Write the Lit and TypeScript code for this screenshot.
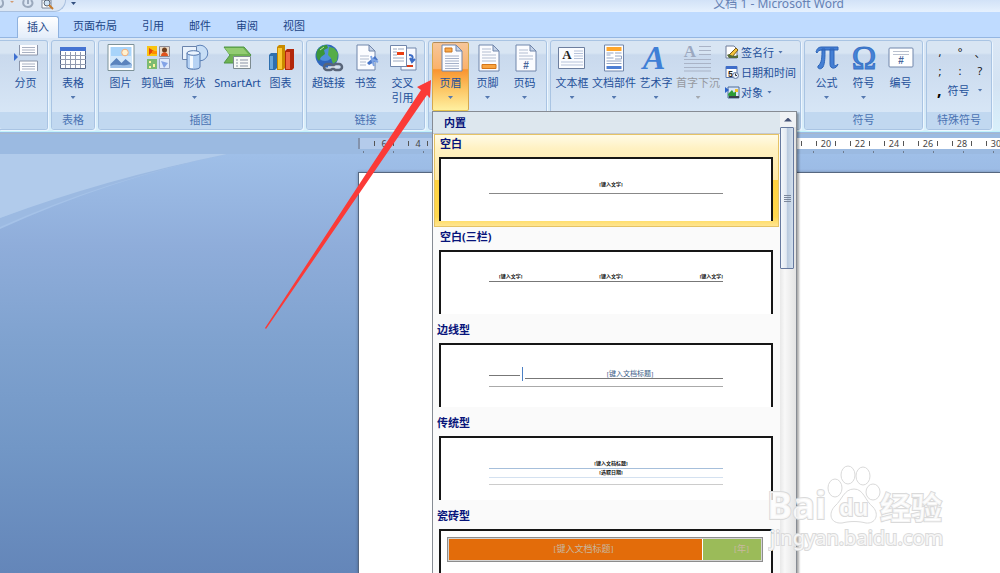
import { LitElement, html, svg, css, nothing, TemplateResult } from "lit";
import { customElement, property } from "lit/decorators.js";
import { classMap } from "lit/directives/class-map.js";

const page = svg`<path d="M5 1h14l6 6v20H5z" fill="#fbfcff" stroke="#7186ab"/><path d="M19 1v6h6z" fill="#c5d3e8" stroke="#7186ab"/>`;

const icons: Record<string, TemplateResult> = {
  blank: svg`<path d="M3 1h15v26H3z" fill="#fff" stroke="#7186ab"/>`,
  break: svg`<g stroke="#8c96aa" fill="#fdfdff"><path d="M7.500 1v10h18V1M7.500 27V17h18v10"/></g>
    <path d="M10 3.500h13M10 6h13M10 8.500h13M10 20h13M10 22.500h13M10 25h13" stroke="#a9b1c2"/><path d="M2 9l4 4-4 4z" fill="#3d6fd0"/>`,
  table: svg`<path d="M1.500 3.500h25v21h-25z" fill="#fff" stroke="#56698c"/><path d="M1 3h26v4H1z" fill="#4674d2"/>
    <path d="M1 11.500h26M1 15.500h26M1 20.500h26M6.500 8v16M11.500 8v16M16.500 8v16M21.500 8v16" stroke="#929bb0"/>`,
  picture: svg`<path d="M1 .5h26v26H1z" fill="#fff" stroke="#7d9299"/><path d="M3.500 3h21v21h-21z" fill="#a8d4fa"/><path d="M3.500 12h21v12h-21z" fill="#d3e8fb"/>
    <circle cx="18" cy="8.500" r="3.300" fill="#fff1cf" stroke="#f2ad79"/><path d="M3.500 20l6-6 5 5 4-4 6 5v2h-21z" fill="#5b83bd"/><path d="M3.500 22c5-3 10 1 21-2v4h-21z" fill="#9dc0e8"/>`,
  clip: svg`<path d="M3 2h10v10H3z" fill="#f9c411"/><path d="M5 4l5 3-5 4z" fill="#e2470b"/><path d="M8 7h5v3H8z" fill="#ff8c00"/>
    <path d="M15.500 2.500h10v10h-10z" fill="#e9d9c7" stroke="#8b8b96"/><circle cx="20.500" cy="6" r="2.500" fill="#704020"/><path d="M17 12c0-5 7-5 7 0z" fill="#e0521c"/>
    <path d="M3 15h10v10H3z" fill="#7dbb72"/><path d="M5 17h2v2H5zM9 20h2v3H9zM5 22h2v2H5z" fill="#fff3a0"/>
    <path d="M15.500 14.500h10v10h-10z" fill="#dfe9fb" stroke="#99a6c4"/><path d="M17 17l7 2-4 5z" fill="#83a2e6"/>`,
  shapes: svg`<circle cx="19" cy="9" r="7.800" fill="#c7def6" stroke="#5d82b8"/><path d="M1.500 2.500h14v13h-14z" fill="#e9f2fc" stroke="#6a84ac"/>
    <path d="M6 9v14c0 3 13 3 13 0V9z" fill="#b7d3f4" stroke="#5578ad"/><path d="M9 10v14h3V10z" fill="#f5faff"/><ellipse cx="12.500" cy="9" rx="6.500" ry="2.300" fill="#eaf4ff" stroke="#5578ad"/>`,
  smartart: svg`<path d="M0 3h20l7 8-7 8H0l6-8z" fill="#6fb253" stroke="#4f9645"/><path d="M1 4h18l5 6H5z" fill="#93cc72"/>
    <path d="M9.500 12.500h17v12h-17z" fill="#f8faf7" stroke="#7d8b90"/><path d="M12 16h2M12 19h2M12 22h2M16 16h8M16 19h8M16 22h8" stroke="#8993a5"/>`,
  chart: svg`<path d="M2 11l2-2h6v15l-2 2H2z" fill="#2f6fae"/><path d="M3 12h3v13H3z" fill="#69a6dc"/><path d="M10 3l2-2h6v23l-2 2h-6z" fill="#c98b00"/><path d="M11 4h4v21h-4z" fill="#f9c932"/>
    <path d="M18 7l2-2h7v19l-2 2h-7z" fill="#b2270b"/><path d="M19 8h4v17h-4z" fill="#ee6744"/>`,
  link: svg`<circle cx="12" cy="12" r="11.500" fill="#2f66bd"/><circle cx="10" cy="9" r="8" fill="#4f90dc"/><path d="M2 7c2-4 6-6 10-6l1 3-4 2 1 4-4 3-2 4C1 14 1 10 2 7z" fill="#3b963a"/><path d="M14 3l5 1 4 5-1 8-4 3-2-6-3-3z" fill="#55ad49"/><path d="M5 6l4-3" stroke="#b9e6a1"/>
    <g fill="none" stroke="#596579" stroke-width="2.500"><rect x="9" y="20" width="9" height="6" rx="3"/><rect x="18" y="20" width="9" height="6" rx="3"/></g><path d="M13 23h10" stroke="#dce2ea" stroke-width="1.500"/>`,
  bookmark: svg`<path d="M5 1h12l6 6v19H5z" fill="#fbfcff" stroke="#7186ab"/><path d="M17 1v6h6z" fill="#c5d3e8" stroke="#7186ab"/><path d="M8 12h9M8 15h9M8 18h6M8 21h6" stroke="#b0bbcf"/><path d="M15 19l8-7 3 4-9 5z" fill="#4775c8"/><path d="M19 12l3 10M26 18l-6-3" stroke="#7ea4e3" stroke-width="2"/>`,
  cross: svg`<path d="M12 4h15v22H12z" fill="#f7f9ff" stroke="#7186ab"/><path d="M20 11c5 0 4 4 2 6M21 14l2 4 3-3" fill="none" stroke="#3c6cc6" stroke-width="2"/><path d="M15 21h9v2h-9z" fill="#da3b15"/>
    <path d="M1.500 1.500h16v21h-16z" fill="#fff" stroke="#7186ab"/><path d="M4 5h4M4 8h4M4 11h4M4 14h11M4 17h11M9 5h6" stroke="#9ba8c0"/><path d="M8 8h7v3H8z" fill="#ea3e13"/>`,
  header: svg`${page}<path d="M8 4h7v4H8z" fill="#f8a849" stroke="#cc751c"/><path d="M8 12h14M8 14.500h14M8 17h14M8 19.500h14M8 22h14M8 24.500h14" stroke="#a4b0c8"/>`,
  footer: svg`${page}<path d="M8 5h9M8 8h9M8 11h14M8 14h14M8 17h14" stroke="#b2bdd1"/><path d="M8 20.500h14v4H8z" fill="#f9a33f" stroke="#d4761a"/>`,
  number: svg`${page}<path d="M8 6h9M8 9h9M8 12h14M8 15h14" stroke="#b2bdd1"/><text x="15" y="25" class="hash">#</text>`,
  textbox: svg`<path d="M.5 3.500h26v21H.5z" fill="#fbfcff" stroke="#6d7f9f"/><text x="9" y="15" class="serif">A</text><path d="M16 7h9M16 9.500h9M16 12h9M16 14.500h9M3 18h22M3 21h22" stroke="#b7c3da"/>`,
  parts: svg`<path d="M4.500 1h19v26h-19z" fill="#fff" stroke="#7186ab"/><path d="M6.500 3h15v4h-15z" fill="#ffa62b"/><path d="M6.500 9h7M6.500 11h4M15 9h6.500M6.500 14h7M15 12h6.500v3H15M6.500 17h15M6.500 19.500h15" stroke="#95a6c5" fill="none"/><path d="M6.500 22h15v3h-15z" fill="#4e7fd4"/>`,
  wordart: svg`<text x="12" y="25" class="art">A</text>`,
  dropcap: svg`<text x="6" y="13" class="cap">A</text><path d="M15 2.500h12M15 6.500h12M15 10.500h12M0 15.500h27M0 19.500h27M0 23.500h27M0 27h27" stroke="#a9b3c6"/>`,
  pi: svg`<path d="M3 8C4 4 6 3 9 3h16v3H9C6 6 5 7 4 9zM9 5h3c0 8 0 14-2 18-2 3-6 2-5-1 4-3 4-9 4-17zM17 5h4v15c0 2 2 2 4 0-1 5-8 6-8 0z" fill="#447fd4" stroke="#2e65b8"/>`,
  omega: svg`<text x="14" y="25" class="omega">Ω</text>`,
  numbering: svg`<rect x="2" y="4" width="24" height="19" rx="1" fill="#fff" stroke="#7186ab"/><path d="M6 7.500h16M6 10.500h16" stroke="#bac1cf"/><text x="14" y="20" class="hash">#</text>`,
  sign: svg`<path d="M1 1h8l3 3v9H1z" fill="#fff" stroke="#6c7b98"/><path d="M4 10l7-7 2 2-6 7z" fill="#f4c33b" stroke="#7b5a16"/><path d="M2 10c3-3 4 3 11 0v3H4z" fill="#556a37"/>`,
  date: svg`<path d="M1 1.500h11v11H1z" fill="#fff" stroke="#5a76ad"/><path d="M1 1h11v3H1z" fill="#3f6dc9"/><text x="5.500" y="12" class="day">5</text><circle cx="10.500" cy="10.500" r="3" fill="#e8f0fb" stroke="#61779e"/><path d="M10.500 8.500v2h1.500" stroke="#333" fill="none"/>`,
  object: svg`<path d="M3 2h11v11H3z" fill="#dbe7f6" stroke="#4d6c9c"/><path d="M0 2l4 3-4 3z" fill="#2b62c9"/><path d="M3 9l4-4 2 3 2-3v8H4z" fill="#2c9b36"/><path d="M10 4h3v3h-3z" fill="#f2c12d"/><path d="M4 12h10" stroke="#38404f" stroke-width="2"/>`,
};

const icon = (name: string, size = 28) =>
  html`<svg class="icon" width=${size} height=${size} viewBox="0 0 ${size} ${size}" aria-hidden="true">${icons[name]}</svg>`;

const iconText = css`
  .icon { display: block; flex: none; overflow: visible; }
  .icon text { text-anchor: middle; }
  .hash { font: bold 10px "Liberation Sans", sans-serif; fill: #47659b; }
  .serif { font: bold 13px "Liberation Serif", serif; fill: #222; }
  .art { font: italic bold 34px "Liberation Serif", serif; fill: #3f7fd6; }
  .cap { font: bold 17px "Liberation Serif", serif; fill: #9ba8c0; }
  .omega { font: 33px "Liberation Serif", serif; fill: #4583d8; stroke: #3a73c6; }
  .day { font: bold 9px "Liberation Sans", sans-serif; fill: #222; }
`;

@customElement("ribbon-button")
class RibbonButton extends LitElement {
  @property() label = "";
  @property() second = "";
  @property() icon = "";
  @property({ type: Boolean }) menu = false;
  @property({ type: Boolean }) active = false;
  @property({ type: Boolean }) disabled = false;

  static styles = [iconText, css`
    :host { display: flex; flex: none; width: 37px; }
    button {
      flex: 1; min-width: 0; display: flex; flex-direction: column; align-items: center;
      padding: 1px 0 0; border: 1px solid transparent; border-radius: 2px; background: none;
      font: inherit; line-height: 15px; color: inherit; white-space: nowrap;
    }
    .icon { margin-bottom: 3px; }
    .label { display: block; }
    .active {
      border-color: #b08a5a #d5a94e #e8c64e;
      background: linear-gradient(#f6c69a, #fbb26b 38%, #f9942f 40%, #fcc766 70%, #fff0a0);
    }
    button:disabled { color: #96999f; }
    .caret { width: 5px; height: 3px; margin-top: 6px; background: #5478b0; clip-path: polygon(0 0, 100% 0, 50% 100%); }
    button:disabled .caret { background: #a5a9b0; }
  `];

  render() {
    return html`<button class=${classMap({ active: this.active })} ?disabled=${this.disabled}>
      ${icon(this.icon)}
      <span class="label">${this.label}</span>
      ${this.second ? html`<span class="label">${this.second}</span>` : nothing}
      ${this.menu ? html`<span class="caret"></span>` : nothing}
    </button>`;
  }
}

@customElement("header-gallery")
class HeaderGallery extends LitElement {
  static styles = css`
    :host {
      display: grid; grid-template-columns: 1fr 16px; box-sizing: border-box;
      border: 1px solid #868b93; border-bottom: 0; background: #fafafa;
      box-shadow: 2px 2px 2px #0005; color: #07147a;
    }
    .heading {
      margin: 0; padding-left: 11px; background: #dde7ee; border-bottom: 1px solid #c5c9cf;
      font-size: 11px; line-height: 21px; font-weight: bold;
    }
    .item {
      display: block; width: 100%; padding: 0 5px 5px 4px; border: 1px solid transparent;
      background: none; font: inherit; color: inherit; text-align: left;
    }
    .list { padding: 0 1px; }
    .name { display: block; padding: 0 0 5px 1px; font-size: 11px; line-height: 17px; font-weight: bold; }
    .outdent .name { margin-left: -3px; }
    .selected {
      border-color: #e5c365;
      background: linear-gradient(#fffbe6, #fff1c2 15%, #ffe9a8 49%, #ffd23f 50%, #ffd850 90%, #ffe591);
    }
    .preview {
      display: block; box-sizing: border-box; height: 64px; padding: 0 48px; overflow: hidden;
      border: solid #161616; border-width: 2px 2px 0; background: #fff; color: #111;
      font-family: "Liberation Serif", "Noto Sans CJK SC", serif; font-size: 5px; line-height: 9px; font-weight: bold;
    }
    .one { display: block; padding: 21px 0 4px 10px; border-bottom: 1px solid #888; text-align: center; }
    .three { display: flex; justify-content: space-between; padding: 20px 0 0 10px; border-bottom: 1px solid #777; }
    .side { display: flex; padding-top: 22px; gap: 2px; font-size: 7px; line-height: 14px; font-weight: normal; color: #3a5b87; text-align: center; }
    .side-left { width: 31px; height: 8px; border-bottom: 1px solid #777; }
    .side-bar { width: 1px; height: 14px; background: #4c80c4; }
    .side-title { flex: 1; height: 11px; border-bottom: 1px solid #777; padding-left: 12px; }
    .rule { display: block; border-bottom: 1px solid #aaa; }
    .side + .rule { padding-top: 5px; }
    .classic { display: block; padding-left: 10px; text-align: center; line-height: 8px; border-bottom: 1px solid #a6bfdb; }
    .classic:first-child { padding-top: 22px; }
    .classic + .classic { border-color: #d4e1f0; }
    .classic + .rule { padding-top: 6px; border-color: #ccc; }
    .wide { padding: 6px 8px 0 6px; }
    .tiles { display: flex; gap: 1px; padding: 1px; border: 1px solid #8d8d8d; outline: 1px solid #d5d5d5; outline-offset: -2px; font-size: 9px; line-height: 21px; font-weight: normal; color: #c8b8a0; }
    .tile-title { flex: 1; background: #e36c0a; text-align: center; padding-left: 16px; }
    .tile-year { width: 46px; padding-right: 12px; background: #9bbb59; text-align: right; }
    .scroll { background: linear-gradient(90deg, #e8e8e8, #f8f8f8 30%, #e3e3e3); display: flex; flex-direction: column; }
    .up { height: 15px; padding: 0; border: 0; background: #f0f2f5; display: grid; place-items: center; }
    .up::before { content: ""; width: 8px; height: 4px; background: #465377; clip-path: polygon(50% 0, 100% 100%, 0 100%); }
    .thumb {
      box-sizing: border-box; width: 14px; height: 142px; border: 1px solid #66799f; border-radius: 1px;
      background: linear-gradient(90deg, #f3f7fb, #e2e9f2 45%, #b8c9de 50%, #d2dfed); display: grid; place-items: center;
    }
    .grip { width: 7px; height: 7px; background: repeating-linear-gradient(#7c889c 0 1px, transparent 1px 2px); }
  `;

  private item(name: string, body: TemplateResult, kind = "") {
    return html`<button class="item ${kind}"><span class="name">${name}</span>${body}</button>`;
  }

  render() {
    return html`
      <div>
        <h2 class="heading">内置</h2>
        <div class="list">
          ${this.item("空白", html`<span class="preview"><span class="one">[键入文字]</span></span>`, "selected")}
          ${this.item("空白(三栏)", html`<span class="preview"><span class="three">
            <span>[键入文字]</span><span>[键入文字]</span><span>[键入文字]</span></span></span>`)}
          ${this.item("边线型", html`<span class="preview"><span class="side">
            <span class="side-left"></span><span class="side-bar"></span><span class="side-title">[键入文档标题]</span></span>
            <span class="rule"></span></span>`, "outdent")}
          ${this.item("传统型", html`<span class="preview"><span class="classic">[键入文档标题]</span>
            <span class="classic">[选取日期]</span><span class="rule"></span></span>`, "outdent")}
          ${this.item("瓷砖型", html`<span class="preview wide"><span class="tiles">
            <span class="tile-title">[键入文档标题]</span><span class="tile-year">[年]</span></span></span>`, "outdent")}
        </div>
      </div>
      <div class="scroll">
        <button class="up" aria-label="向上滚动"></button>
        <div class="thumb"><span class="grip"></span></div>
      </div>`;
  }
}

@customElement("app-root")
class AppRoot extends LitElement {
  static styles = [iconText, css`
    :host {
      --page-left: 358px;
      position: relative; display: flex; flex-direction: column; height: 100vh; overflow: hidden;
      font: 11px "Noto Sans", "Noto Sans CJK SC", sans-serif; color: #24509a; background: #9bbae3;
    }
    .title-bar { display: flex; align-items: flex-end; height: 12px; background: linear-gradient(#d2e2f7, #e6f1fe); }
    .quick {
      box-sizing: border-box; display: flex; align-items: center; gap: 6px; width: 66px; height: 12px; overflow: hidden;
      border: solid #a9c0df; border-width: 0 1px 1px 0; border-radius: 0 0 14px 0; background: #dbe6f4;
    }
    .more { width: 5px; height: 3px; margin: 0 0 7px 5px; background: #33507f; clip-path: polygon(0 0, 100% 0, 50% 100%); }
    .title { margin: 0 156px 0 auto; font-size: 12px; line-height: 17px; font-weight: normal; color: #6581b4; }
    .tabs { display: flex; align-items: flex-end; gap: 1px; box-sizing: border-box; height: 26px; padding-left: 17px; background: #bfdbff; border-bottom: 1px solid #94b6e2; }
    .tab { height: 22px; padding: 0 12px; border: 0; background: none; font: inherit; line-height: 20px; color: #1c4587; }
    .current { padding: 0 9px 2px; margin: 0 1px -1px 0; border: 1px solid #8fb2df; border-bottom: 0; border-radius: 3px 3px 0 0; background: linear-gradient(#fff, #e3edfa); line-height: 18px; }
    .ribbon { display: flex; gap: 3px; padding: 2px 0 1px; background: linear-gradient(#dbe7f5, #d4e3f3 50%, #d9f0fb); border-bottom: 1px solid #c1f3fb; }
    .group {
      flex: none; box-sizing: border-box; display: flex; flex-direction: column;
      border: 1px solid #a9c4e3; border-radius: 3px; box-shadow: 1px 1px 0 #edf6ff;
      background: linear-gradient(#d8e5f3 0 12px, #c9d9ed 14px, #d7e6f6 72px);
    }
    .clipped { width: 48px; overflow: hidden; border-left: 0; border-radius: 0 3px 3px 0; }
    .clipped .tools { justify-content: flex-end; gap: 5px; }
    .tools { display: flex; height: 69px; padding: 1px 3px; }
    .caption { margin: 0; height: 17px; line-height: 16px; font-size: 11px; font-weight: normal; text-align: center; background: #c1d8f0; color: #4a73b3; border-radius: 0 0 2px 2px; }
    .solo .tools { padding: 1px; justify-content: center; }
    .solo { width: 44px; }
    .dense .tools { padding: 1px 0; }
    .dense ribbon-button { width: 42px; }
    .broad { width: 49px; }
    .anchor { position: relative; display: flex; }
    header-gallery { position: absolute; z-index: 2; top: 100%; left: 0; width: 365px; height: calc(100vh - 111px); overflow: hidden; }
    .stack { display: flex; flex-direction: column; width: 75px; padding-left: 6px; }
    .small { display: flex; align-items: center; gap: 2px; height: 20px; padding: 0; border: 0; background: none; font: inherit; color: inherit; white-space: nowrap; }
    .arrow-down { flex: none; width: 5px; height: 3px; margin-left: 2px; background: #5478b0; clip-path: polygon(0 0, 100% 0, 50% 100%); }
    .special { display: grid; grid-template-columns: repeat(3, 20px); grid-auto-rows: 19px; width: 58px; }
    .mark { padding: 0; border: 0; background: none; font: inherit; color: #111; }
    .all-marks { grid-column: 1 / -1; gap: 6px; padding-left: 7px; }
    .dot { font-size: 16px; line-height: 16px; color: #000; font-weight: bold; }
    .ruler-bar { height: 21px; padding: 4px 0 0 var(--page-left); box-sizing: border-box; border-top: 1px solid #a6b7cc; background: #9bbae1; margin-top: 1px; }
    .ruler { display: flex; height: 11px; overflow: hidden; background: linear-gradient(90deg, #b4cbeb 128px, #fff 128px); color: #444; font-size: 9px; line-height: 11px; }
    .edge { flex: none; box-sizing: border-box; width: 9px; border-left: 2px solid #8393ad; }
    .mark-cell { flex: none; box-sizing: border-box; display: flex; width: 34px; align-items: center; justify-content: center; gap: 2px; }
    .mark-cell::before, .mark-cell::after { content: ""; width: 1px; height: 5px; background: #555; }
    .value { width: 14px; text-align: center; }
    .stops { height: 2px; margin-top: 2px; background: repeating-linear-gradient(90deg, transparent 0 5px, #6f7c90 5px 6px, transparent 6px 30px); }
    .workspace { position: relative; flex: 1; display: flex; padding: 18px 0 0 var(--page-left); background: linear-gradient(#9fbfe8, #8fadda 22%, #7fa2cf 45%, #7297c6 70%, #6486b9); }
    .swoosh { position: absolute; inset: 0 auto auto 0; }
    .sheet { position: relative; flex: 1; border: solid #566780; border-width: 1px 0 0 1px; background: #fff; box-shadow: 0 0 3px #0004; }
    .pointer { position: absolute; z-index: 3; left: 0; top: 0; pointer-events: none; }
    .watermark { position: absolute; z-index: 3; right: 48px; bottom: 16px; }
    .watermark text { font-family: "Noto Sans", "Noto Sans CJK SC", sans-serif; fill: #fffc; stroke: #dadada; paint-order: stroke; stroke-width: 2px; }
    .pads { fill: #fffc; stroke: #dadada; stroke-width: 1px; }
    .watermark .brand { font-size: 38px; font-weight: bold; }
    .watermark .inner { font-size: 23px; font-weight: bold; }
    .watermark .topic { font-size: 31px; font-weight: bold; }
    .watermark .site { font-size: 20px; }
  `];

  private group(caption: string, body: TemplateResult, kind = "") {
    return html`<section class="group ${kind}"><div class="tools">${body}</div><h2 class="caption">${caption}</h2></section>`;
  }

  private ruler() {
    const values = [6, 4, 2, 0, 2, 4, 6, 8, 10, 12, 14, 16, 18, 20, 22, 24, 26, 28, 30, 32, 34, 36, 38, 40, 42, 44, 46, 48];
    return html`<div class="ruler-bar"><div class="ruler"><span class="edge"></span>
      ${values.map((v) => html`<span class="mark-cell"><span class="value">${v || nothing}</span></span>`)}
    </div><div class="stops"></div></div>`;
  }

  render() {
    return html`
      <header class="title-bar">
        <div class="quick">
          <svg width="64" height="12" viewBox="0 0 64 12" aria-hidden="true">
            <path d="M0 7c3 0 4-4 2-7M24 0c-2 4 0 7 4 7s6-4 3-7M28 0v4" fill="none" stroke="#9ba9bd" stroke-width="2"/>
            <path d="M10 1h4l-2 2z" fill="#d39b73"/>
            <path d="M42 0v8h9V0z" fill="#fff" stroke="#7a8598"/><circle cx="47" cy="3" r="3" fill="#cfe2f4" stroke="#596575"/><path d="M49 5l4 4" stroke="#c77b2a" stroke-width="2"/>
          </svg>
        </div>
        <span class="more"></span>
        <h1 class="title">文档 1 - Microsoft Word</h1>
      </header>
      <nav class="tabs" role="tablist">
        ${["插入", "页面布局", "引用", "邮件", "审阅", "视图"].map((t, i) =>
          html`<button role="tab" aria-selected=${i === 0} class=${classMap({ tab: true, current: i === 0 })}>${t}</button>`)}
      </nav>
      <div class="ribbon">
        ${this.group("", html`
          <ribbon-button icon="blank" label="空白页"></ribbon-button>
          <ribbon-button icon="break" label="分页"></ribbon-button>`, "clipped")}
        ${this.group("表格", html`<ribbon-button icon="table" label="表格" menu></ribbon-button>`, "solo")}
        ${this.group("插图", html`
          <ribbon-button icon="picture" label="图片"></ribbon-button>
          <ribbon-button icon="clip" label="剪贴画"></ribbon-button>
          <ribbon-button icon="shapes" label="形状" menu></ribbon-button>
          <ribbon-button class="broad" icon="smartart" label="SmartArt"></ribbon-button>
          <ribbon-button icon="chart" label="图表"></ribbon-button>`)}
        ${this.group("链接", html`
          <ribbon-button icon="link" label="超链接"></ribbon-button>
          <ribbon-button icon="bookmark" label="书签"></ribbon-button>
          <ribbon-button icon="cross" label="交叉" second="引用"></ribbon-button>`)}
        ${this.group("页眉和页脚", html`
          <div class="anchor">
            <ribbon-button icon="header" label="页眉" menu active></ribbon-button>
            <header-gallery></header-gallery>
          </div>
          <ribbon-button icon="footer" label="页脚" menu></ribbon-button>
          <ribbon-button icon="number" label="页码" menu></ribbon-button>`)}
        ${this.group("文本", html`
          <ribbon-button icon="textbox" label="文本框" menu></ribbon-button>
          <ribbon-button icon="parts" label="文档部件" menu></ribbon-button>
          <ribbon-button icon="wordart" label="艺术字" menu></ribbon-button>
          <ribbon-button icon="dropcap" label="首字下沉" menu disabled></ribbon-button>
          <div class="stack">
            <button class="small">${icon("sign", 14)}签名行<span class="arrow-down"></span></button>
            <button class="small">${icon("date", 14)}日期和时间</button>
            <button class="small">${icon("object", 14)}对象<span class="arrow-down"></span></button>
          </div>`, "dense")}
        ${this.group("符号", html`
          <ribbon-button icon="pi" label="公式" menu></ribbon-button>
          <ribbon-button icon="omega" label="符号" menu></ribbon-button>
          <ribbon-button icon="numbering" label="编号"></ribbon-button>`)}
        ${this.group("特殊符号", html`
          <div class="special">
            ${[",", "°", "、", ";", ":", "?"].map((m) => html`<button class="mark">${m}</button>`)}
            <button class="small all-marks"><span class="dot">,</span>符号<span class="arrow-down"></span></button>
          </div>`)}
      </div>
      ${this.ruler()}
      <main class="workspace">
        <svg class="swoosh" width="228" height="76" viewBox="0 0 228 76" aria-hidden="true">
          <path d="M0 0h227Q110 25 0 75z" fill="#a5c2e8"/><path d="M0 0h227Q105 26 0 73L0 64Q105 23 190 8z" fill="#9cbae2"/><path d="M0 0h227Q105 25 0 64z" fill="#b1cbeb"/>
        </svg>
        <div class="sheet"></div>
      </main>
      <svg class="pointer" width="440" height="335" viewBox="0 0 440 335" aria-hidden="true">
        <path d="M265 328L421 90 417 87 431 80 430 98 427 95 266 329z" fill="#fb3a37"/>
      </svg>
      <svg class="watermark" width="184" height="96" viewBox="0 0 184 96">
        <text x="-1" y="58" class="brand">Bai</text>
        <g class="pads"><ellipse cx="67" cy="27" rx="7" ry="9"/><ellipse cx="80" cy="14" rx="7" ry="9"/><ellipse cx="95" cy="15" rx="7" ry="9"/><ellipse cx="105" cy="31" rx="7" ry="8"/>
          <path d="M86 28c10 0 11 12 19 18 7 8 2 17-7 16-8-2-16-2-24 0-12 1-14-10-7-17 7-6 9-17 19-17z"/></g>
        <text x="71" y="55" class="inner">du</text>
        <text x="112" y="58" class="topic">经验</text>
        <text x="2" y="84" class="site">jingyan.baidu.com</text>
      </svg>`;
  }
}
